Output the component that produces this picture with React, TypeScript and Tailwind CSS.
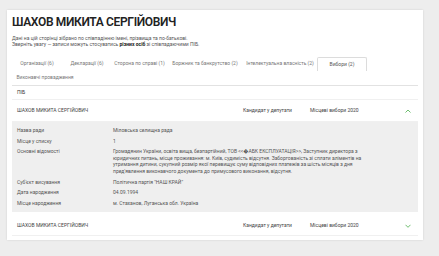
import React from "react";

const tabs = [
  { label: "Організації (6)", w: "w-[50px]" },
  { label: "Декларації (6)", w: "w-[50px]" },
  { label: "Сторона по справі (1)", w: "w-[55px]" },
  { label: "Боржник та банкрутство (2)", w: "w-[76px]" },
  { label: "Інтелектуальна власність (2)", w: "w-[74px]" },
];

function Chevron({ up }: { up: boolean }) {
  return (
    <svg width="6" height="4" viewBox="0 0 6 4" className="block">
      <path
        d={up ? "M0.5 3.5 L3 1 L5.5 3.5" : "M0.5 0.8 L3 3.3 L5.5 0.8"}
        fill="none"
        stroke="#5fb760"
        strokeWidth="0.9"
      />
    </svg>
  );
}

function PersonRow({ up, extra }: { up: boolean; extra?: string }) {
  return (
    <div
      className={`flex items-center border-b border-[#f0f0f0] text-[5px] text-[#444] ${
        extra ?? "h-[22px]"
      }`}
    >
      <div className="w-[231px] pl-[5px] whitespace-nowrap">ШАХОВ МИКИТА СЕРГІЙОВИЧ</div>
      <div className="w-[67px] whitespace-nowrap">Кандидат у депутати</div>
      <div className="w-[95px] whitespace-nowrap">Місцеві вибори 2020</div>
      <Chevron up={up} />
    </div>
  );
}

const details: { label: string; value: string[] }[] = [
  { label: "Назва ради", value: ["Міловська селищна рада"] },
  { label: "Місце у списку", value: ["1"] },
  {
    label: "Основні відомості",
    value: [
      "Громадянин України, освіта вища, безпартійний, ТОВ <<\uFFFDАБК ЕКСПЛУАТАЦІЯ>>, Заступник директора з",
      "юридичних питань, місце проживання: м. Київ, судимість відсутня. Заборгованість зі сплати аліментів на",
      "утримання дитини, сукупний розмір якої перевищує суму відповідних платежів за шість місяців з дня",
      "пред'явлення виконавчого документа до примусового виконання, відсутня.",
    ],
  },
  { label: "Суб'єкт висування", value: ["Політична партія \"НАШ КРАЙ\""] },
  { label: "Дата народження", value: ["04.09.1994"] },
  { label: "Місце народження", value: ["м. Стаханов, Луганська обл. Україна"] },
];

export default function App() {
  return (
    <div
      className="w-[439px] h-[256px] bg-[#ededed] pt-[10px] pl-[7px] overflow-hidden"
      style={{ fontFamily: "Roboto, 'Noto Sans', Arial, sans-serif" }}
    >
      <div className="w-[416px] bg-white shadow-[0_0_2px_rgba(0,0,0,0.12)] px-[5px] pt-[4px] pb-[4px]">
        <h1 className="text-[12px] leading-[16px] font-semibold tracking-[-0.35px] text-[#222] whitespace-nowrap">
          ШАХОВ МИКИТА СЕРГІЙОВИЧ
        </h1>
        <p className="mt-[6px] text-[5px] leading-[5.5px] text-[#555]">
          Дані на цій сторінці зібрано по співпадінню імені, прізвища та по-батькові.
          <br />
          Зверніть увагу — записи можуть стосуватись <b className="text-[#222]">різних осіб</b> зі
          співпадаючими ПІБ.
        </p>

        <div className="mt-[10px] flex flex-wrap border-b border-[#e2e2e2] text-[5px] text-[#777]">
          {tabs.map((t) => (
            <div
              key={t.label}
              className={`${t.w} h-[14px] flex items-center justify-center whitespace-nowrap`}
            >
              {t.label}
            </div>
          ))}
          <div className="w-[50px] h-[14px] flex items-center justify-center whitespace-nowrap border border-b-0 border-[#dcdcdc] rounded-t-[2px] bg-white text-[#555]">
            Вибори (2)
          </div>
          <div className="w-[66px] h-[14px] flex items-center justify-center whitespace-nowrap">
            Виконавчі провадження
          </div>
        </div>

        <div className="flex items-center h-[14px] border-b border-[#f0f0f0] pl-[5px] text-[5px] text-[#333]">
          ПІБ
        </div>

        <PersonRow up={true} />

        <div className="bg-[#efefef] pt-[3px] pb-[3.5px] text-[5px] text-[#555]">
          {details.map((d) => (
            <div key={d.label} className="flex py-[2.1px] leading-[6.5px]">
              <div className="w-[101px] pl-[5px] shrink-0 whitespace-nowrap">{d.label}</div>
              <div className="flex flex-col">
                {d.value.map((v, i) => (
                  <span key={i} className="whitespace-nowrap">
                    {v}
                  </span>
                ))}
              </div>
            </div>
          ))}
        </div>

        <PersonRow up={false} extra="h-[24px] pt-[4px]" />
      </div>
    </div>
  );
}
